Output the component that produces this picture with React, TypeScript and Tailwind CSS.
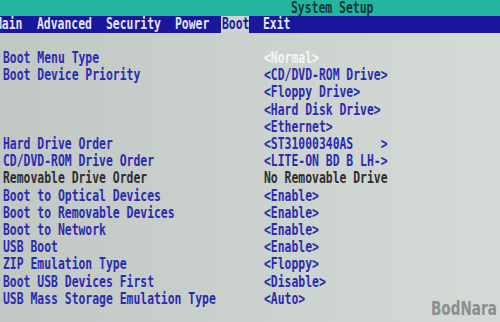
import React from 'react';

type Row = { label: string; values: string[]; dark?: boolean; selected?: boolean };

const rows: Row[] = [
  { label: 'Boot Menu Type', values: ['<Normal>'], selected: true },
  {
    label: 'Boot Device Priority',
    values: ['<CD/DVD-ROM Drive>', '<Floppy Drive>', '<Hard Disk Drive>', '<Ethernet>'],
  },
  { label: 'Hard Drive Order', values: ['<ST31000340AS    >'] },
  { label: 'CD/DVD-ROM Drive Order', values: ['<LITE-ON BD B LH->'] },
  { label: 'Removable Drive Order', values: ['No Removable Drive'], dark: true },
  { label: 'Boot to Optical Devices', values: ['<Enable>'] },
  { label: 'Boot to Removable Devices', values: ['<Enable>'] },
  { label: 'Boot to Network', values: ['<Enable>'] },
  { label: 'USB Boot', values: ['<Enable>'] },
  { label: 'ZIP Emulation Type', values: ['<Floppy>'] },
  { label: 'Boot USB Devices First', values: ['<Disable>'] },
  { label: 'USB Mass Storage Emulation Type', values: ['<Auto>'] },
];

const menu = [
  { name: 'Main', w: 'w-[42px]' },
  { name: 'Advanced', w: 'w-[69px]' },
  { name: 'Security', w: 'w-[69px]' },
  { name: 'Power', w: 'w-[47px]' },
];

// bios font is tall and narrow, so squeeze a mono font sideways
function T({ children, className = '' }: { children: React.ReactNode; className?: string }) {
  return (
    <span className={`inline-block origin-left scale-x-[0.76] whitespace-pre ${className}`}>{children}</span>
  );
}

export default function App() {
  return (
    <div
      className="relative w-[500px] h-[322px] overflow-hidden bg-gradient-to-r from-[#c1c7c3] via-[#cbd1cd] to-[#d4dad6] font-bold text-[15px]"
      style={{ fontFamily: '"DejaVu Sans Mono", "Liberation Mono", monospace' }}
    >
      <div className="h-4 bg-[#25b3a2] flex items-center pl-[291px] leading-4 text-[#0c3a36]">
        <T>System Setup</T>
      </div>
      <div className="h-[17px] bg-[#1b169e] flex items-center leading-[17px] text-[#e4e6f2]">
        <div className="flex -ml-[5px]">
          {menu.map((m) => (
            <div key={m.name} className={`${m.w} shrink-0`}>
              <T>{m.name}</T>
            </div>
          ))}
        </div>
        <div className="w-[28px] shrink-0 h-full bg-[#cdd4d3] text-[#1b169e] pl-px ml-[-1px]">
          <T>Boot</T>
        </div>
        <div className="pl-[14px]">
          <T>Exit</T>
        </div>
      </div>
      <div className="pt-[17px] pl-[3px] leading-[17.2px] text-[#2b2bb0]">
        {rows.map((r) => (
          <div key={r.label} className="flex">
            <div className={`w-[261px] shrink-0 ${r.dark ? 'text-[#2e2e32]' : ''}`}>
              <T>{r.label}</T>
            </div>
            <div className="flex flex-col">
              {r.values.map((v) => (
                <div key={v} className={r.selected ? 'text-[#f4f6f6]' : r.dark ? 'text-[#2e2e32]' : ''}>
                  <T>{v}</T>
                </div>
              ))}
            </div>
          </div>
        ))}
      </div>
      <div
        className="absolute left-[431px] top-[297px] text-[20px] text-[#8b8f8d] leading-[22px]"
        style={{ fontFamily: '"DejaVu Sans", sans-serif' }}
      >
        <span className="inline-block origin-left scale-x-[0.68] whitespace-pre">BodNara</span>
      </div>
    </div>
  );
}
